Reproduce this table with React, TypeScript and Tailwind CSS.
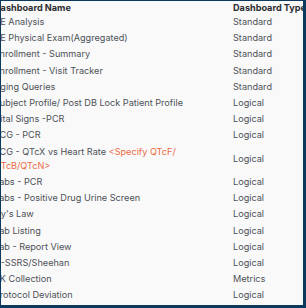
import React from "react";

type Row = { name: string; note?: string; type: string };

const rows: Row[] = [
  { name: "AE Analysis", type: "Standard" },
  { name: "AE Physical Exam(Aggregated)", type: "Standard" },
  { name: "Enrollment - Summary", type: "Standard" },
  { name: "Enrollment - Visit Tracker", type: "Standard" },
  { name: "Aging Queries", type: "Standard" },
  { name: "Subject Profile/ Post DB Lock Patient Profile", type: "Logical" },
  { name: "Vital Signs -PCR", type: "Logical" },
  { name: "ECG - PCR", type: "Logical" },
  { name: "ECG - QTcX vs Heart Rate", note: "<Specify QTcF/ QTcB/QTcN>", type: "Logical" },
  { name: "Labs - PCR", type: "Logical" },
  { name: "Labs - Positive Drug Urine Screen", type: "Logical" },
  { name: "Hy's Law", type: "Logical" },
  { name: "Lab Listing", type: "Logical" },
  { name: "Lab - Report View", type: "Logical" },
  { name: "C-SSRS/Sheehan", type: "Logical" },
  { name: "PK Collection", type: "Metrics" },
  { name: "Protocol Deviation", type: "Logical" },
];

export default function App() {
  return (
    <div
      className="w-[306px] h-[308px] overflow-hidden bg-[#f9f9f9] border-[#0c3a5f] border-l-[1px] border-t-[1px] border-r-[3px] border-b-[3px]"
      style={{ fontFamily: "Inter, 'Noto Sans', sans-serif" }}
    >
      <div className="ml-[-7px] grid grid-cols-[239px_auto] text-[9.15px] text-[#4d5157]">
        <div className="h-[13px] leading-[13px] font-bold text-[#2b2d31] whitespace-nowrap">
          Dashboard Name
        </div>
        <div className="h-[13px] leading-[13px] font-bold text-[#2b2d31] whitespace-nowrap">
          Dashboard Type
        </div>
        {rows.map((r) => (
          <React.Fragment key={r.name}>
            <div className="pr-[10px] py-[1px] leading-[14.2px]">
              {r.name}
              {r.note && <span className="text-[#ec6a44]"> {r.note}</span>}
            </div>
            <div className="py-[1px] leading-[14.2px] flex items-center whitespace-nowrap">
              {r.type}
            </div>
          </React.Fragment>
        ))}
      </div>
    </div>
  );
}
